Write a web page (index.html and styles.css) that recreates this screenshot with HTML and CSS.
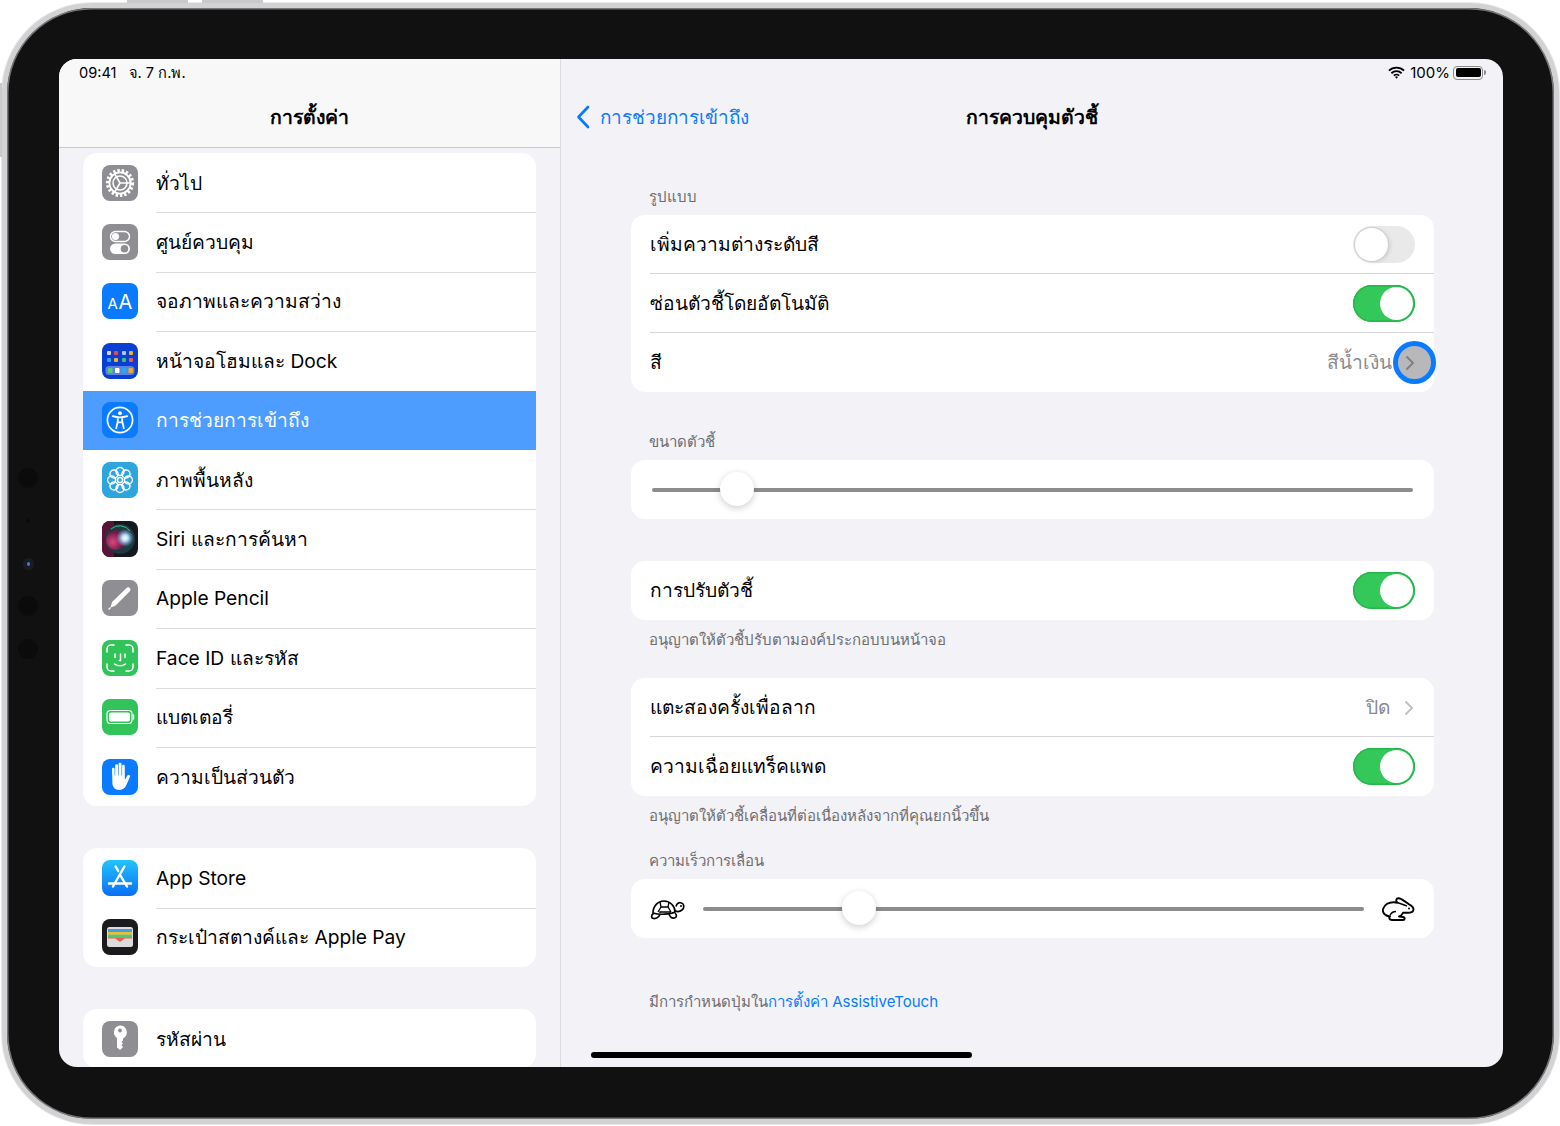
FILE: index.html
```html
<!DOCTYPE html>
<html lang="th">
<head>
<meta charset="utf-8">
<title>การควบคุมตัวชี้</title>
<link rel="stylesheet" href="styles.css">
</head>
<body>
<div class="device">
  <span class="hw hw-top1"></span><span class="hw hw-top2"></span><span class="hw hw-left"></span>
  <span class="sensor s1"></span><span class="sensor s2"></span><span class="sensor s3"></span><span class="sensor s4"></span><span class="sensor s5"></span>
  <div class="screen">
    <aside class="sidebar">
      <header class="side-head">
        <div class="status"><span>09:41</span><span>จ. 7 ก.พ.</span></div>
        <h1 class="side-title">การตั้งค่า</h1>
      </header>
      <div class="side-body">
        <ul class="group">
          <li class="item"><svg class="ico" viewBox="0 0 36 36"><rect width="36" height="36" rx="8" fill="#8e8e93"/><circle cx="18" cy="18" r="12.500" fill="none" stroke="#fff" stroke-width="3.200" stroke-dasharray="2.400 1.900"/><circle cx="18" cy="18" r="10.600" fill="none" stroke="#fff" stroke-width="1.800"/><circle cx="18" cy="18" r="7" fill="none" stroke="#fff" stroke-width="1.500"/><path d="M18 18h10M18 18l-5 -8.700M18 18l-5 8.700" stroke="#fff" stroke-width="1.700" fill="none"/></svg><span class="lab">ทั่วไป</span></li>
          <li class="item"><svg class="ico" viewBox="0 0 36 36"><rect width="36" height="36" rx="8" fill="#8e8e93"/><rect x="8.500" y="7.500" width="19" height="10" rx="5" fill="none" stroke="#fff" stroke-width="1.500"/><circle cx="13.500" cy="12.500" r="3.600" fill="#fff"/><rect x="8" y="19.500" width="20" height="10.500" rx="5.200" fill="#fff"/><circle cx="22.500" cy="24.700" r="3.800" fill="#8e8e93"/></svg><span class="lab">ศูนย์ควบคุม</span></li>
          <li class="item"><svg class="ico" viewBox="0 0 36 36"><rect width="36" height="36" rx="8" fill="#0a7bff"/><text x="5.500" y="26" class="aa-s">A</text><text x="16.500" y="26" class="aa-l">A</text></svg><span class="lab">จอภาพและความสว่าง</span></li>
          <li class="item"><svg class="ico" viewBox="0 0 36 36"><rect width="36" height="36" rx="8" fill="#0b3fd3"/><rect x="5" y="8" width="4" height="4" rx="1" fill="#d5d5d5"/><rect x="12" y="8" width="4" height="4" rx="1" fill="#e8484f"/><rect x="20" y="8" width="4" height="4" rx="1" fill="#a9c8f5"/><rect x="27" y="8" width="4" height="4" rx="1" fill="#f5b21f"/><rect x="5" y="15" width="4" height="4" rx="1" fill="#2aa7ef"/><rect x="12" y="15" width="4" height="4" rx="1" fill="#f5b21f"/><rect x="20" y="15" width="4" height="4" rx="1" fill="#3ac56a"/><rect x="27" y="15" width="4" height="4" rx="1" fill="#ef5a4a"/><rect x="3.500" y="23" width="29" height="9" rx="3.500" fill="#5b83e6"/><rect x="6" y="25" width="4.500" height="5" rx="1" fill="#58cf6c"/><rect x="13" y="25" width="4.500" height="5" rx="1" fill="#fff"/><rect x="20" y="25" width="4.500" height="5" rx="1" fill="#29a6f0"/><rect x="26.500" y="25" width="4.500" height="5" rx="1" fill="#f3a91f"/></svg><span class="lab">หน้าจอโฮมและ Dock</span></li>
          <li class="item item-on"><svg class="ico" viewBox="0 0 36 36"><rect width="36" height="36" rx="8" fill="#0a7bff"/><circle cx="18" cy="18" r="12.600" fill="none" stroke="#fff" stroke-width="1.700"/><circle cx="18" cy="11.200" r="1.900" fill="#fff"/><path d="M10.800 14.200c2.300.8 4.600 1.200 7.200 1.200s4.900-.4 7.200-1.200M15.800 15.600v3.600l-1.600 7M20.200 15.600v3.600l1.600 7M15.800 20.400h4.400" fill="none" stroke="#fff" stroke-width="1.800" stroke-linecap="round"/></svg><span class="lab">การช่วยการเข้าถึง</span></li>
          <li class="item"><svg class="ico" viewBox="0 0 36 36"><rect width="36" height="36" rx="8" fill="#2ea6dd"/><g fill="none" stroke="#fff" stroke-width="1.500"><circle cx="18" cy="18" r="2.600"/><circle cx="18" cy="9.600" r="4"/><circle cx="18" cy="26.400" r="4"/><circle cx="9.600" cy="18" r="4"/><circle cx="26.400" cy="18" r="4"/><circle cx="12" cy="12" r="4"/><circle cx="24" cy="12" r="4"/><circle cx="12" cy="24" r="4"/><circle cx="24" cy="24" r="4"/></g></svg><span class="lab">ภาพพื้นหลัง</span></li>
          <li class="item"><svg class="ico" viewBox="0 0 36 36"><defs><radialGradient id="sr1" cx=".35" cy=".6" r=".5"><stop offset="0" stop-color="#e0457f"/><stop offset="1" stop-color="#6a1b45"/></radialGradient><radialGradient id="sr2" cx=".5" cy=".5" r=".5"><stop offset="0" stop-color="#fff"/><stop offset=".35" stop-color="#b9dcf2"/><stop offset="1" stop-color="#5ab0e0" stop-opacity="0"/></radialGradient></defs><rect width="36" height="36" rx="8" fill="#15181c"/><path d="M0 8a8 8 0 0 1 8-8h4v36H8a8 8 0 0 1-8-8z" fill="#5c1338"/><circle cx="18" cy="18" r="15" fill="#1d3a40"/><circle cx="14" cy="19" r="10" fill="url(#sr1)"/><circle cx="23" cy="17" r="9" fill="url(#sr2)"/><path d="M9 8a13 13 0 0 1 19 2" fill="none" stroke="#3fb98a" stroke-width="1"/></svg><span class="lab">Siri และการค้นหา</span></li>
          <li class="item"><svg class="ico" viewBox="0 0 36 36"><rect width="36" height="36" rx="8" fill="#8e8e93"/><path d="M8.500 27.500l1.600-5.500L24.500 8c1-.9 2.400-.9 3.300 0s.9 2.400 0 3.300L13.400 25.800z" fill="#fff"/><path d="M6.500 29.500l2.200-2" stroke="#fff" stroke-width="1.200"/></svg><span class="lab">Apple Pencil</span></li>
          <li class="item"><svg class="ico" viewBox="0 0 36 36"><rect width="36" height="36" rx="8" fill="#32c35a"/><path d="M5 12V9a4 4 0 0 1 4-4h3M24 5h3a4 4 0 0 1 4 4v3M31 24v3a4 4 0 0 1-4 4h-3M12 31H9a4 4 0 0 1-4-4v-3M13 14v3.500M23 14v3.500M18.500 14v6.500h-1.300M12.500 24c3 2.400 8 2.400 11 0" fill="none" stroke="#fff" stroke-width="1.500" stroke-linecap="round"/></svg><span class="lab">Face ID และรหัส</span></li>
          <li class="item"><svg class="ico" viewBox="0 0 36 36"><rect width="36" height="36" rx="8" fill="#32c35a"/><rect x="5" y="11.500" width="25" height="13" rx="3.500" fill="none" stroke="#fff" stroke-width="1.200"/><rect x="7" y="13.500" width="21" height="9" rx="2" fill="#fff"/><path d="M31.500 16v4" stroke="#fff" stroke-width="1.300" stroke-linecap="round"/></svg><span class="lab">แบตเตอรี่</span></li>
          <li class="item"><svg class="ico" viewBox="0 0 36 36"><rect width="36" height="36" rx="8" fill="#0a7bff"/><path d="M10 10c0-1.800 2.600-1.800 2.600 0v6.500h.6V6.500c0-1.800 2.800-1.800 2.800 0v10h.6V5.200c0-1.900 2.900-1.900 2.900 0v11.300h.6V7.200c0-1.800 2.700-1.800 2.700 0V20l.4.2 2.200-3.600c1-1.600 3.300-.6 2.500 1.200l-3.400 8c-1.400 3.300-3.600 5.200-7.200 5.200-4.400 0-6.300-2.400-6.900-6.400z" fill="#fff"/></svg><span class="lab">ความเป็นส่วนตัว</span></li>
        </ul>
        <ul class="group">
          <li class="item"><svg class="ico" viewBox="0 0 36 36"><defs><linearGradient id="as" x1="0" y1="0" x2="0" y2="1"><stop offset="0" stop-color="#22c4fb"/><stop offset="1" stop-color="#0a6ef6"/></linearGradient></defs><rect width="36" height="36" rx="8" fill="url(#as)"/><path d="M13.600 6.500l2.600 4.500M22.400 6.500L11 26.500M7 23.500h22M17.800 14.500l7.200 12" fill="none" stroke="#fff" stroke-width="2.400" stroke-linecap="round"/></svg><span class="lab">App Store</span></li>
          <li class="item"><svg class="ico" viewBox="0 0 36 36"><rect width="36" height="36" rx="8" fill="#1b1b1d"/><rect x="5" y="8" width="26" height="20" rx="2.500" fill="#dcdcdc"/><rect x="6" y="10" width="24" height="3" fill="#3f9ee6"/><rect x="6" y="13" width="24" height="2.600" fill="#f2bd2c"/><rect x="6" y="15.600" width="24" height="2.600" fill="#58c46c"/><path d="M6 18.200h24v1.300h-7.500l-3 2.600a2.200 2.200 0 0 1-3 0l-3-2.600H6z" fill="#ec5c52"/></svg><span class="lab">กระเป๋าสตางค์และ Apple Pay</span></li>
        </ul>
        <ul class="group">
          <li class="item"><svg class="ico" viewBox="0 0 36 36"><rect width="36" height="36" rx="8" fill="#8e8e93"/><path d="M18 4.500a6.800 6.800 0 0 1 3 12.900v2l-1.600 1.600 1.600 1.600-1.600 1.600 1.600 1.700-3 3-3-2.400v-9.600A6.800 6.800 0 0 1 18 4.500z" fill="#fff"/><circle cx="18" cy="9.500" r="1.900" fill="#8e8e93"/></svg><span class="lab">รหัสผ่าน</span></li>
        </ul>
      </div>
    </aside>
    <main class="detail">
      <header class="detail-head">
        <div class="status status-right">
          <svg class="wifi" viewBox="0 0 18 13"><path d="M1 4.600a11.600 11.600 0 0 1 16 0M3.600 7.300a7.800 7.800 0 0 1 10.800 0M6.200 9.900a4 4 0 0 1 5.600 0" fill="none" stroke="#000" stroke-width="1.900"/><path d="M9 13l-1.600-1.700a2.300 2.300 0 0 1 3.200 0z" fill="#000"/></svg>
          <span>100%</span>
          <span class="batt"><span class="batt-fill"></span></span><span class="batt-tip"></span>
        </div>
        <nav class="navbar">
          <a class="back"><svg class="back-chev" viewBox="0 0 14 24"><path d="M12 2L2.500 12l9.500 10" fill="none" stroke="#0a7bff" stroke-width="2.700" stroke-linecap="round" stroke-linejoin="round"/></svg><span>การช่วยการเข้าถึง</span></a>
          <h2 class="detail-title">การควบคุมตัวชี้</h2>
        </nav>
      </header>
      <div class="content">
        <p class="cap cap-first">รูปแบบ</p>
        <section class="card">
          <div class="row"><span>เพิ่มความต่างระดับสี</span><span class="switch"><span class="knob"></span></span></div>
          <div class="row"><span>ซ่อนตัวชี้โดยอัตโนมัติ</span><span class="switch switch-on"><span class="knob"></span></span></div>
          <div class="row row-ring"><span>สี</span><span class="val">สีน้ำเงิน</span><span class="ring"><svg class="chev chev-ring" viewBox="0 0 10 16"><path d="M1.500 1.500L8 8l-6.500 6.500" fill="none" stroke="#7d7d80" stroke-width="1.800"/></svg></span></div>
        </section>
        <p class="cap cap-gap">ขนาดตัวชี้</p>
        <section class="card slider-card">
          <div class="track"><span class="thumb thumb-size"></span></div>
        </section>
        <section class="card card-gap">
          <div class="row"><span>การปรับตัวชี้</span><span class="switch switch-on"><span class="knob"></span></span></div>
        </section>
        <p class="cap cap-note">อนุญาตให้ตัวชี้ปรับตามองค์ประกอบบนหน้าจอ</p>
        <section class="card card-note">
          <div class="row"><span>แตะสองครั้งเพื่อลาก</span><span class="val val-plain">ปิด</span><svg class="chev chev-row" viewBox="0 0 10 16"><path d="M1.500 1.500L8 8l-6.500 6.500" fill="none" stroke="#c0c0c4" stroke-width="2"/></svg></div>
          <div class="row"><span>ความเฉื่อยแทร็คแพด</span><span class="switch switch-on"><span class="knob"></span></span></div>
        </section>
        <p class="cap cap-note">อนุญาตให้ตัวชี้เคลื่อนที่ต่อเนื่องหลังจากที่คุณยกนิ้วขึ้น</p>
        <p class="cap cap-speed">ความเร็วการเลื่อน</p>
        <section class="card speed-card">
          <svg class="turtle" viewBox="0 0 36 22"><path d="M3 15C3 8 8 3 14 3s11 5 11 11c-5 2.500-16 3-22 1z" fill="none" stroke="#000" stroke-width="1.700"/><path d="M8 14l3-5h7l3 5M11 9l-1-5M18 9l1-5M10 15v-1h11" fill="none" stroke="#000" stroke-width="1.300"/><path d="M3.500 15.500C1 17 1 20 3.500 20.500S9 19 10 16.500M19 16c1 3 3 4.500 5.500 4s2.500-3 .5-5M25 12.500c2 1.500 5 1 7-.5 2.500-2 2.500-6-.5-7s-5 .8-5.500 3.500" fill="none" stroke="#000" stroke-width="1.700"/><circle cx="31" cy="8" r="1" fill="#000"/></svg>
          <div class="track"><span class="thumb thumb-speed"></span></div>
          <svg class="rabbit" viewBox="0 0 33 24"><path d="M1 12C2.500 7.500 7 5 12 5.200L15.500 5.800C13.500 4 14 1 16.800 1.300 19 1.600 24 5 27 7.300 29.500 8.500 31.500 10.500 31.500 12.500 31.500 14.800 28.500 15.800 25.500 15.800L21 15.800C20 18 18 19.200 17 19.500L21 20C23.500 20.500 23 23 21 23L10 23C7.500 23 6.500 20.800 8 19.500 4 19 0 16.500 1 12Z" fill="none" stroke="#000" stroke-width="1.900" stroke-linejoin="round"/><path d="M16 5.800l9 3.200M8 18.500c1-2.500 3-4 6-4" fill="none" stroke="#000" stroke-width="1.500"/><circle cx="27" cy="11.500" r="1" fill="#000"/></svg>
        </section>
        <p class="cap cap-foot">มีการกำหนดปุ่มใน<a class="link">การตั้งค่า AssistiveTouch</a></p>
      </div>
    </main>
    <span class="home-bar"></span>
  </div>
</div>
</body>
</html>
```
FILE: styles.css
```css
* { box-sizing: border-box; }
html, body { margin: 0; padding: 0; background: #fff; }
body { width: 1560px; height: 1126px; overflow: hidden; padding: 3px 1px 2px 2px; font-family: Inter, "Noto Sans", sans-serif; color: #000; }
ul, h1, h2, p { margin: 0; padding: 0; list-style: none; font-weight: 400; }
.device { position: relative; width: 1557px; height: 1121px; padding: 51px 51px 51px 52px; border: 5px solid #d2d2d4; border-radius: 90px; background: #111; box-shadow: inset 0 0 0 1.500px #77777a, 0 0 0 1px #e9e9ea; }
.hw { position: absolute; background: #c9c9cb; }
.hw-top1 { top: -8px; left: 120px; width: 61px; height: 3px; }
.hw-top2 { top: -8px; left: 195px; width: 61px; height: 3px; }
.hw-left { top: 75px; left: -7px; width: 2px; height: 74px; }
.sensor { position: absolute; left: 11px; border-radius: 50%; background: #0b0b0b; width: 20px; height: 20px; }
.s1 { top: 460px; }
.s2 { top: 511px; left: 19px; width: 4px; height: 4px; }
.s3 { top: 554px; left: 20px; width: 3px; height: 4px; background: #3e7fd8; box-shadow: 0 0 0 4px #1a1b22; }
.s4 { top: 588px; }
.s5 { top: 631px; }
.screen { position: relative; display: flex; width: 1444px; height: 1008px; border-radius: 18px; overflow: hidden; background: #f2f2f7; }
.sidebar { width: 502px; flex: none; display: flex; flex-direction: column; border-right: 1px solid #dcdcde; }
.side-head { flex: none; height: 89px; background: #f8f8f9; border-bottom: 1px solid #c8c8ca; }
.status { display: flex; align-items: center; gap: 12px; height: 27px; padding: 0 20px; font-size: 14.600px; }
.status-right { justify-content: flex-end; gap: 5px; padding: 0 17px 0 0; font-size: 15px; }
.side-title, .detail-title { font-size: 19.400px; font-weight: 700; text-align: center; line-height: 62px; }
.side-body { flex: 1; padding: 5px 24px 0; overflow: hidden; }
.group { width: 453px; margin-bottom: 42px; background: #fff; border-radius: 14px; overflow: hidden; }
.item { display: flex; align-items: center; gap: 18px; height: 59.400px; padding-left: 19px; font-size: 19.200px; position: relative; }
.item + .item .lab::before { content: ""; position: absolute; top: 0; left: 73px; right: 0; height: 1px; background: #dcdcde; }
.item-on { background: #4c9dff; color: #fff; }
.item + .item-on .lab::before, .item-on + .item .lab::before { display: none; }
.ico { width: 36px; height: 36px; flex: none; }
.aa-s { font: 400 15px Inter, sans-serif; fill: #fff; }
.aa-l { font: 400 20px Inter, sans-serif; fill: #fff; }
.detail { flex: 1; min-width: 0; display: flex; flex-direction: column; }
.detail-head { flex: none; height: 89px; }
.wifi { width: 17px; height: 13px; }
.batt { width: 30px; height: 14px; border: 1px solid #8a8a8c; border-radius: 4px; padding: 1.500px; margin-left: -2px; }
.batt-fill { display: block; height: 100%; background: #000; border-radius: 2px; }
.batt-tip { width: 2px; height: 5px; margin-left: -4px; background: #8a8a8c; border-radius: 0 2px 2px 0; }
.navbar { position: relative; height: 62px; }
.back { position: absolute; left: 15px; top: 0; height: 62px; display: flex; align-items: center; gap: 10px; color: #0a7bff; font-size: 18.900px; }
.back-chev { width: 14px; height: 24px; }
.content { padding: 40px 69px 0 70px; }
.cap { font-size: 15px; line-height: 18px; color: #6d6d72; padding-left: 18px; }
.cap-first { margin-bottom: 9px; }
.cap-gap { margin: 41px 0 9px; }
.cap-note { margin-top: 11px; margin-bottom: -1px; }
.cap-speed { margin: 28px 0 9px; }
.cap-foot { margin-top: 55px; }
.link { color: #0a7bff; }
.card { background: #fff; border-radius: 14px; }
.card-gap { margin-top: 42px; }
.card-note { margin-top: 30px; }
.row { position: relative; display: flex; align-items: center; height: 59px; padding: 0 19px; font-size: 19.200px; }
.row > span:first-child { margin-right: auto; margin-bottom: 2px; }
.row + .row::before { content: ""; position: absolute; top: -1px; left: 19px; right: 0; height: 1px; background: #d6d6d8; }
.switch { position: relative; display: block; width: 62px; height: 37px; border-radius: 19px; background: #e9e9ea; }
.switch .knob { position: absolute; top: 2px; left: 2px; width: 33px; height: 33px; border-radius: 50%; background: #fff; box-shadow: 0 0 0 1px #d0d0d0, 2px 1px 4px rgba(0,0,0,.12); }
.switch-on { background: #34c759; box-shadow: inset 0 0 0 1.500px #22b84a; }
.switch-on .knob { left: 27px; box-shadow: none; }
.val { color: #8a8a8e; margin-bottom: 2px; }
.val-plain { margin-right: 14px; }
.chev { width: 10px; height: 16px; }
.row-ring { padding-right: 0; }
.ring { display: flex; align-items: center; justify-content: center; width: 43px; height: 43px; margin: 0 -2px 0 1px; flex: none; border-radius: 50%; border: 5px solid #0a7bff; background: #b8b8ba; }
.chev-ring { margin-right: 9px; }
.chev-row { margin-right: 1px; }
.slider-card { display: flex; align-items: center; height: 59px; padding: 0 21px; }
.track { position: relative; flex: 1; height: 4px; background: #8c8c8e; border-radius: 2px; }
.thumb { position: absolute; top: -16px; width: 34px; height: 34px; border-radius: 50%; background: #fff; box-shadow: 0 2px 7px rgba(0,0,0,.2); }
.thumb-size { left: 68px; }
.thumb-speed { left: 139px; }
.speed-card { display: flex; align-items: center; height: 59px; padding: 0 19px; }
.turtle { width: 36px; height: 22px; margin-right: 17px; flex: none; }
.rabbit { width: 33px; height: 24px; margin-left: 18px; flex: none; }
.home-bar { position: absolute; left: 532px; bottom: 9px; width: 381px; height: 6px; border-radius: 3px; background: #000; }
```
